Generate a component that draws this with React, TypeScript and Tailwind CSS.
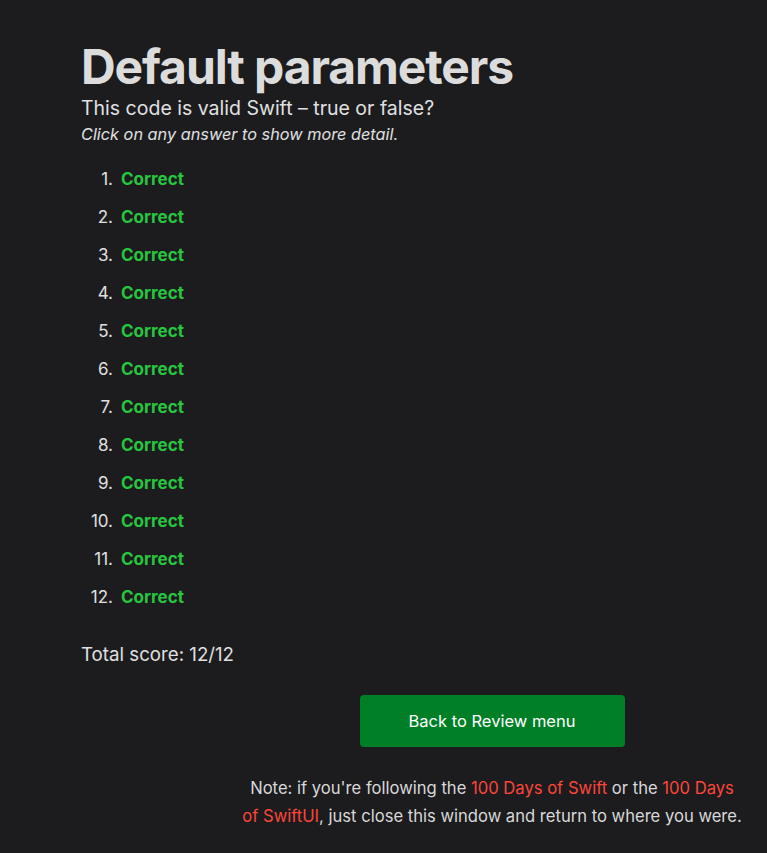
export default function App() {
  const answers = Array.from({ length: 12 }, (_, i) => i + 1);

  return (
    <div className="min-h-[853px] bg-[#1c1c1e] text-[#e0e0e2] font-['Inter',sans-serif] pl-[81px] pr-[26px] pt-[40px] pb-6">
      <h1 className="text-[48px] font-bold leading-[54px] text-[#dcdcdd] tracking-[-1.1px]">Default parameters</h1>
      <p className="text-[19.5px] leading-[26px] mt-[1px]">This code is valid Swift – true or false?</p>
      <p className="text-[16.3px] italic leading-[26px]">Click on any answer to show more detail.</p>

      <ol className="mt-[21px] flex flex-col gap-[16px]">
        {answers.map((n) => (
          <li key={n} className="flex text-[17px] leading-[22px]">
            <span className="w-[32px] text-right">{n}.</span>
            <span className="ml-[8px] font-bold text-[#27c63f]">Correct</span>
          </li>
        ))}
      </ol>

      <p className="mt-[35px] text-[18.7px] leading-[24px]">Total score: 12/12</p>

      <div className="flex justify-end mt-[28px]">
        <div className="w-[502px] -mr-[2px] flex flex-col items-center text-center">
          <button className="w-[265px] h-[52px] rounded-[4px] bg-[#007f27] text-white text-[16.5px]">
            Back to Review menu
          </button>
          <p className="mt-[27px] text-[16.6px] leading-[28px] text-[#d8d8da] whitespace-nowrap">
            Note: if you're following the <a className="text-[#ff453a]">100 Days of Swift</a> or the{" "}
            <a className="text-[#ff453a]">
              100 Days
              <br />
              of SwiftUI
            </a>
            , just close this window and return to where you were.
          </p>
        </div>
      </div>
    </div>
  );
}
